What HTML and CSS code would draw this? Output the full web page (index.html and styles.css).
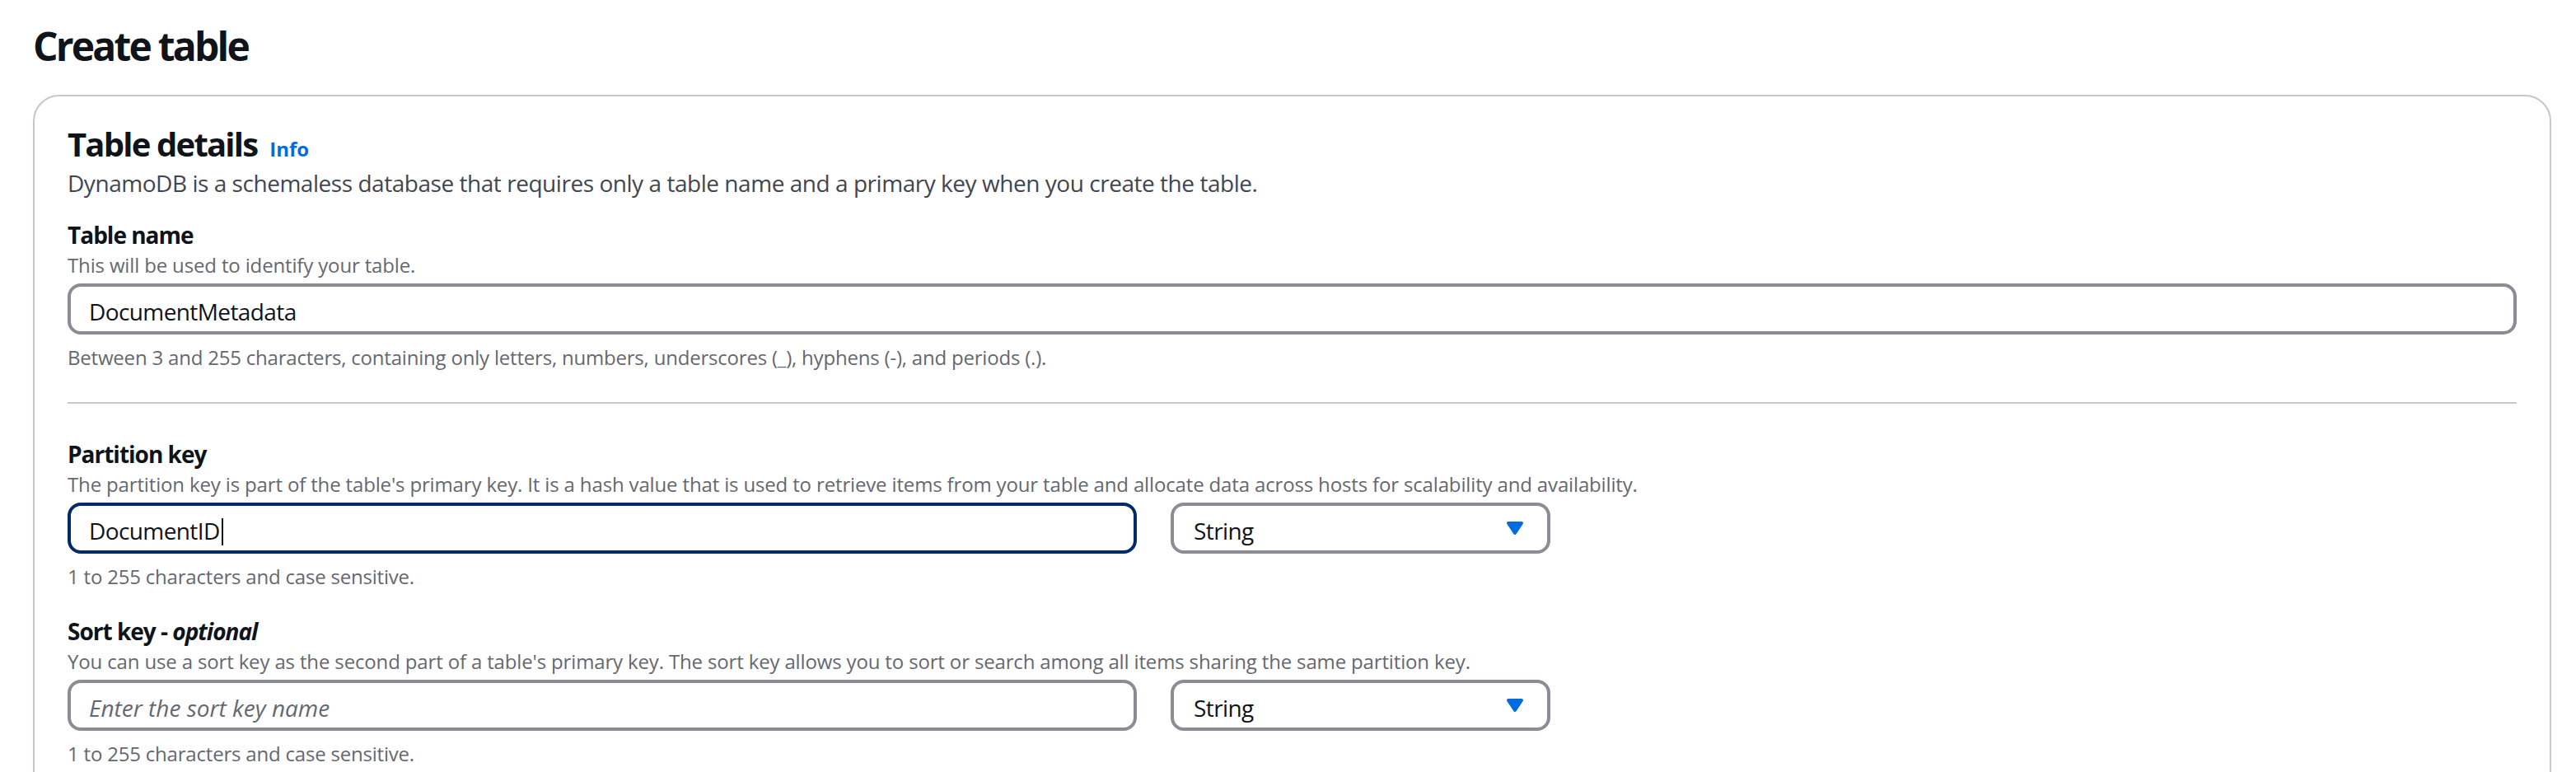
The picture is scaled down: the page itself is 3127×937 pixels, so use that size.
FILE: index.html
```html
<!DOCTYPE html>
<html lang="en">
<head>
<meta charset="utf-8">
<title>Create table</title>
<link rel="stylesheet" href="styles.css">
</head>
<body>
<main class="page">
  <h1 class="page-title">Create table</h1>
  <section class="card">
    <header class="card-header">
      <h2 class="card-title"><span class="card-title-text">Table details</span><a class="info-link" href="#">Info</a></h2>
      <p class="card-desc">DynamoDB is a schemaless database that requires only a table name and a primary key when you create the table.</p>
    </header>

    <div class="field field-first">
      <div class="label">Table name</div>
      <div class="hint">This will be used to identify your table.</div>
      <div class="control">
        <div class="input"><span class="value">DocumentMetadata</span></div>
      </div>
      <div class="constraint">Between 3 and 255 characters, containing only letters, numbers, underscores (_), hyphens (-), and periods (.).</div>
    </div>

    <hr class="divider">

    <div class="field field-partition">
      <div class="label">Partition key</div>
      <div class="hint">The partition key is part of the table's primary key. It is a hash value that is used to retrieve items from your table and allocate data across hosts for scalability and availability.</div>
      <div class="control key-row">
        <div class="input input-key input-focused"><span class="value">DocumentID<span class="caret"></span></span></div>
        <div class="select">
          <span class="value">String</span>
          <svg class="select-icon" viewBox="0 0 16 16" width="32" height="32" aria-hidden="true"><path d="M4 5h8l-4 6-4-6z"/></svg>
        </div>
      </div>
      <div class="constraint">1 to 255 characters and case sensitive.</div>
    </div>

    <div class="field field-sort">
      <div class="label">Sort key - <em>optional</em></div>
      <div class="hint">You can use a sort key as the second part of a table's primary key. The sort key allows you to sort or search among all items sharing the same partition key.</div>
      <div class="control key-row">
        <div class="input input-key"><span class="placeholder">Enter the sort key name</span></div>
        <div class="select">
          <span class="value">String</span>
          <svg class="select-icon" viewBox="0 0 16 16" width="32" height="32" aria-hidden="true"><path d="M4 5h8l-4 6-4-6z"/></svg>
        </div>
      </div>
      <div class="constraint">1 to 255 characters and case sensitive.</div>
    </div>
  </section>
</main>
</body>
</html>
```

FILE: styles.css
```css
html, body {
  margin: 0;
  background: #ffffff;
}

body {
  font-family: "Open Sans", "Noto Sans", sans-serif;
  color: #0f141a;
  overflow: hidden;
}

.page {
  padding: 26px 30px 0 40px;
}

.page-title {
  margin: 0;
  font-size: 48px;
  line-height: 60px;
  font-weight: 700;
  letter-spacing: -2.8px;
  color: #0f141a;
}

.card {
  margin-top: 29px;
  border: 2px solid #c6c6cd;
  border-radius: 32px;
  padding: 33px 40px 200px;
}

.card-title {
  margin: 0;
  display: flex;
  align-items: baseline;
  gap: 15px;
  font-size: 40px;
  line-height: 50px;
  font-weight: 700;
  color: #0f141a;
}

.card-title-text {
  letter-spacing: -1.8px;
}

.info-link {
  font-size: 24px;
  line-height: 32px;
  font-weight: 700;
  color: #006ce0;
  text-decoration: none;
}

.card-desc {
  margin: 0;
  font-size: 28px;
  line-height: 44px;
  letter-spacing: -0.46px;
  color: #424650;
}

.field-first {
  margin-top: 20px;
}

.label {
  font-size: 28px;
  line-height: 42px;
  font-weight: 700;
  letter-spacing: -1px;
  color: #0f141a;
}

.label em {
  font-style: italic;
}

.hint {
  font-size: 24px;
  line-height: 32px;
  letter-spacing: -0.15px;
  color: #656871;
}

.control {
  margin-top: 6px;
}

.input {
  box-sizing: border-box;
  height: 62px;
  border: 4px solid #8c8c94;
  border-radius: 16px;
  padding: 6px 22px 0;
  display: flex;
  align-items: center;
  font-size: 28px;
  line-height: 48px;
  color: #0f141a;
  background: #ffffff;
}

.value {
  letter-spacing: -0.6px;
}

.input-focused {
  border-color: #002b66;
}

.caret {
  display: inline-block;
  width: 2px;
  height: 33px;
  margin-left: 2px;
  vertical-align: -7px;
  background: #0f141a;
}

.placeholder {
  font-style: italic;
  color: #656871;
}

.constraint {
  margin-top: 12px;
  font-size: 24px;
  line-height: 32px;
  letter-spacing: -0.2px;
  color: #656871;
}

.divider {
  margin: 38px 0 0;
  border: 0;
  border-top: 2px solid #c6c6cd;
  height: 0;
}

.field-partition {
  margin-top: 40px;
}

.field-sort {
  margin-top: 29px;
}

.key-row {
  display: flex;
  gap: 41px;
}

.input-key {
  width: 1298px;
}

.select {
  box-sizing: border-box;
  width: 461px;
  height: 62px;
  border: 4px solid #8c8c94;
  border-radius: 16px;
  padding: 6px 23px 0 24px;
  display: flex;
  align-items: center;
  justify-content: space-between;
  font-size: 28px;
  line-height: 48px;
  color: #0f141a;
}

.select-icon {
  display: block;
  margin-top: -6px;
}

.select-icon path {
  fill: #006ce0;
  stroke: #006ce0;
  stroke-width: 2;
  stroke-linejoin: round;
}
```
